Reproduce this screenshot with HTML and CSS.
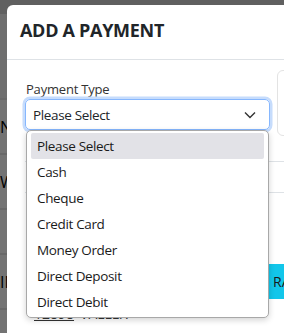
FILE: index.html
```html
<!DOCTYPE html>
<html lang="en">

<head>
    <meta charset="UTF-8">
    <meta name="viewport" content="width=device-width, initial-scale=1.0">
    <title>Add a Payment</title>
    <link rel="stylesheet" href="styles.css">
</head>

<body>
    <div class="page">
        <div class="page-row page-row-top"></div>
        <div class="page-row page-row-head"></div>
        <div class="page-row">N</div>
        <div class="page-row">W</div>
        <div class="page-row page-row-short"></div>
        <div class="page-row">IM</div>
    </div>

    <div class="overlay"></div>

    <div class="modal">
        <div class="modal-header">
            <h2 class="modal-title">ADD A PAYMENT</h2>
        </div>
        <div class="modal-body">
            <div class="form-row">
                <div class="form-group">
                    <label class="form-label">Payment Type</label>
                    <div class="select-wrap">
                        <div class="select">
                            <span>Please Select</span>
                            <svg class="chevron" width="14" height="14" viewBox="0 0 14 14">
                                <path d="M2 4.5 L7 9.5 L12 4.5" fill="none" stroke="#333" stroke-width="1.4" />
                            </svg>
                        </div>
                        <ul class="dropdown">
                            <li class="dropdown-item selected">Please Select</li>
                            <li class="dropdown-item">Cash</li>
                            <li class="dropdown-item">Cheque</li>
                            <li class="dropdown-item">Credit Card</li>
                            <li class="dropdown-item">Money Order</li>
                            <li class="dropdown-item">Direct Deposit</li>
                            <li class="dropdown-item">Direct Debit</li>
                        </ul>
                    </div>
                </div>
                <div class="side-box"></div>
            </div>

            <div class="table-line first"></div>
            <div class="table-line"></div>

            <div class="action-row">
                <button class="btn-cyan">RA</button>
            </div>

            <div class="result-row">
                <a class="result-link">12898</a>
                <span>VALLEX</span>
            </div>
        </div>
    </div>
</body>

</html>
```

FILE: styles.css
```css
body {
    margin: 0;
    width: 284px;
    height: 333px;
    overflow: hidden;
    position: relative;
    font-family: "Open Sans", "Noto Sans", sans-serif;
    background-color: #ffffff;
}

.page {
    display: flex;
    flex-direction: column;
}

.page-row {
    height: 53px;
    border-bottom: 2px solid #e6e6e6;
    font-size: 16px;
    color: #000;
    display: flex;
    align-items: center;
}

.page-row-top {
    height: 14px;
    background-color: #d4d4d4;
    border-bottom: none;
}

.page-row-head {
    height: 84px;
    background-color: #f4f4f4;
}

.page-row-short {
    height: 43px;
}

.overlay {
    position: absolute;
    top: 0;
    left: 0;
    right: 0;
    bottom: 0;
    background-color: rgba(0, 0, 0, 0.55);
}

.modal {
    position: absolute;
    top: 5px;
    left: 7px;
    width: 520px;
    height: 360px;
    background-color: #ffffff;
    border-radius: 6px;
}

.modal-header {
    height: 49px;
    padding-bottom: 5px;
    border-bottom: 1px solid #dee2e6;
    display: flex;
    align-items: center;
    padding-left: 13px;
}

.modal-title {
    margin: 0;
    font-size: 18px;
    font-weight: 700;
    color: #212529;
    letter-spacing: -0.3px;
}

.modal-body {
    padding: 20px 18px 0 18px;
}

.form-row {
    display: flex;
    gap: 7px;
    align-items: flex-start;
}

.form-group {
    width: 245px;
}

.form-label {
    display: block;
    font-size: 13px;
    color: #333;
    margin-bottom: 1px;
    margin-left: 1px;
    letter-spacing: -0.2px;
}

.select-wrap {
    position: relative;
}

.select {
    height: 29px;
    border: 1px solid #86b7fe;
    border-radius: 5px;
    box-shadow: 0 0 0 2.5px #c6dcfc;
    display: flex;
    align-items: center;
    justify-content: space-between;
    padding: 0 12px 0 7px;
    font-size: 13.5px;
    letter-spacing: -0.35px;
    color: #212529;
}

.chevron {
    display: block;
}

.dropdown {
    position: absolute;
    top: 31px;
    left: 1px;
    right: 1px;
    margin: 0;
    padding: 2px 4px 2px 4px;
    list-style: none;
    background-color: #ffffff;
    border: 1px solid #a8a8a8;
    border-radius: 5px;
    box-shadow: 0 2px 6px rgba(0, 0, 0, 0.18);
    z-index: 2;
}

.dropdown-item {
    height: 26px;
    line-height: 26px;
    padding-left: 6px;
    font-size: 13.5px;
    letter-spacing: -0.35px;
    color: #1a1a1a;
    border-radius: 2px;
}

.dropdown-item.selected {
    background-color: #e2e2e7;
}

.side-box {
    width: 120px;
    height: 64px;
    margin-top: -10px;
    border: 1px solid #e3e3e3;
    border-radius: 6px;
}

.table-line {
    height: 30px;
    border-bottom: 1px solid #dee2e6;
}

.table-line.first {
    height: 25px;
}

.action-row {
    padding-top: 71px;
    padding-left: 230px;
}

.btn-cyan {
    height: 35px;
    padding: 0 12px 0 18px;
    border: none;
    background-color: #12c6ea;
    color: #1a1a1a;
    font-family: "Open Sans", "Noto Sans", sans-serif;
    font-size: 14px;
}

.result-row {
    padding-top: 5px;
    padding-left: 9px;
    font-size: 14px;
    color: #333;
    display: flex;
    gap: 6px;
}

.result-link {
    text-decoration: underline;
}
```
